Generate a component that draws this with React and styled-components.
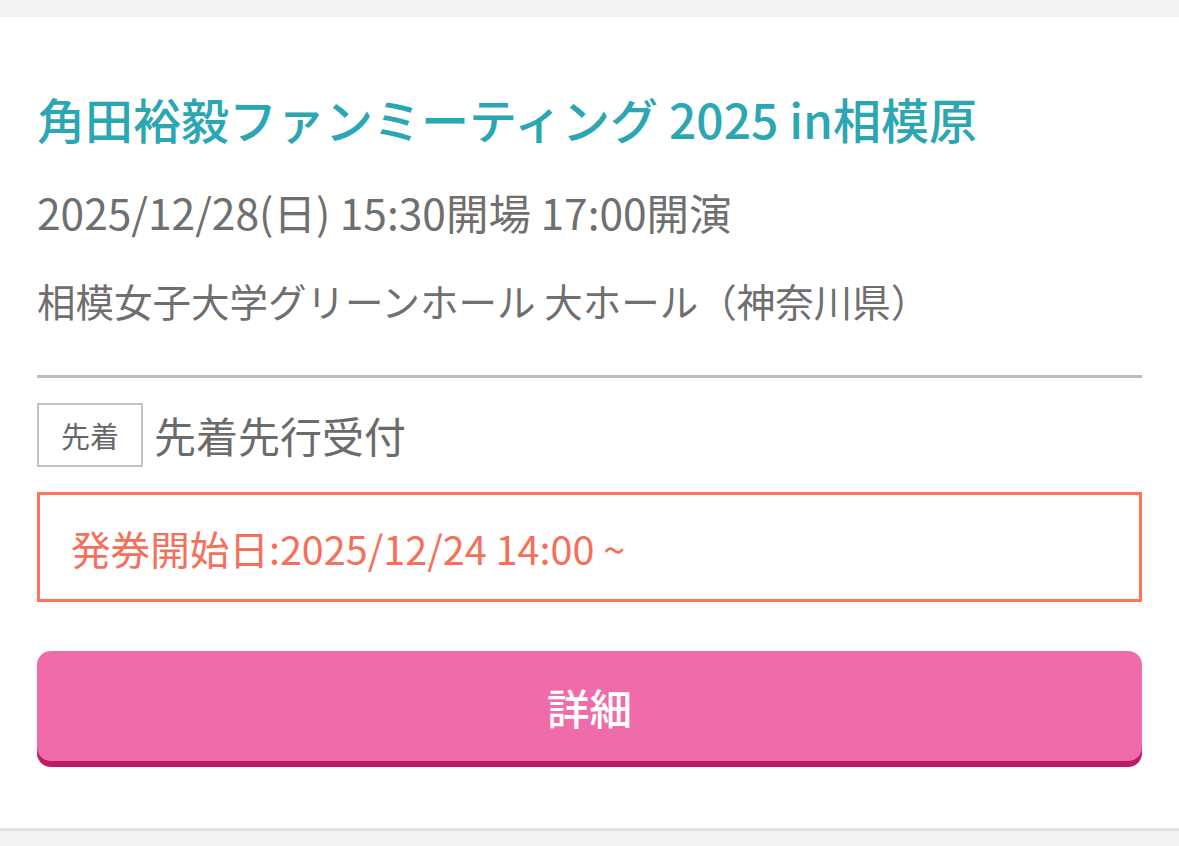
import React from 'react';
import styled, { createGlobalStyle } from 'styled-components';

const GlobalStyle = createGlobalStyle`
  html, body {
    margin: 0;
    padding: 0;
    background: #f0f0f0;
  }
  body {
    font-family: "Noto Sans CJK JP", "Noto Sans", sans-serif;
  }
`;

const Page = styled.div`
  padding-top: 17px;
  background: #f2f2f2;
  min-height: 846px;
`;

const Card = styled.section`
  background: #fff;
  padding: 69px 37px 67px;
  border-bottom: 3px solid #e2e2e2;
`;

const Title = styled.h1`
  margin: 0;
  font-size: 48px;
  line-height: 64px;
  font-weight: 500;
  color: #2ba6b3;
  white-space: nowrap;
`;

const InfoLine = styled.p`
  margin: ${(p) => p.$gap}px 0 0;
  font-size: ${(p) => p.$size}px;
  line-height: ${(p) => p.$lh}px;
  color: #6f6f6f;
  white-space: nowrap;
`;

const Divider = styled.hr`
  margin: 50px 0 0;
  border: none;
  height: 3px;
  background: #bdbdbd;
`;

const TypeRow = styled.div`
  display: flex;
  align-items: center;
  gap: 11px;
  margin-top: 25px;
`;

const Badge = styled.span`
  box-sizing: border-box;
  width: 106px;
  height: 64px;
  border: 2px solid #c2c2c2;
  display: flex;
  align-items: center;
  justify-content: center;
  font-size: 29px;
  color: #666;
`;

const TypeLabel = styled.span`
  font-size: 42px;
  line-height: 56px;
  color: #6b6b6b;
`;

const NoticeBox = styled.div`
  box-sizing: border-box;
  margin-top: 25px;
  height: 110px;
  border: 3px solid #ff7359;
  padding: 0 31px;
  display: flex;
  align-items: center;
  font-size: 39.6px;
  color: #f5705a;
`;

const DetailButton = styled.button`
  display: block;
  width: 100%;
  margin-top: 49px;
  height: 110px;
  border: none;
  border-radius: 14px;
  background: #f06ba9;
  box-shadow: 0 6px 0 #c01a66;
  color: #fff;
  font-family: inherit;
  font-size: 42.5px;
  font-weight: 500;
  cursor: pointer;
`;

export default function App() {
  return (
    <>
      <GlobalStyle />
      <Page>
        <Card>
          <Title>角田裕毅ファンミーティング 2025 in相模原</Title>
          <InfoLine $gap={34} $size={42.5} $lh={56}>
            2025/12/28(日) 15:30開場 17:00開演
          </InfoLine>
          <InfoLine $gap={35} $size={38.5} $lh={50}>
            相模女子大学グリーンホール 大ホール（神奈川県）
          </InfoLine>
          <Divider />
          <TypeRow>
            <Badge>先着</Badge>
            <TypeLabel>先着先行受付</TypeLabel>
          </TypeRow>
          <NoticeBox>発券開始日:2025/12/24 14:00 ~</NoticeBox>
          <DetailButton>詳細</DetailButton>
        </Card>
      </Page>
    </>
  );
}
